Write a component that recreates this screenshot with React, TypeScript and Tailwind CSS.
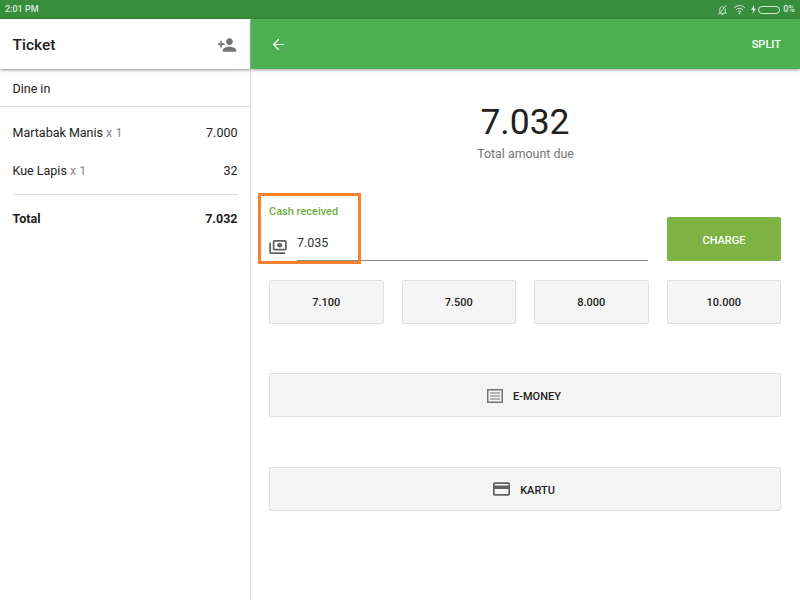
import { ArrowLeft } from 'lucide-react';

const quickAmounts = ['7.100', '7.500', '8.000', '10.000'];

function StatusBar() {
  return (
    <div className="h-[19px] bg-[#388e3c] flex items-center justify-between pl-[5px] pr-[5px] text-white/80 text-[9px] font-medium">
      <span>2:01 PM</span>
      <div className="flex items-center">
        <svg viewBox="0 0 24 24" className="w-[11px] h-[12px]" fill="none" stroke="currentColor" strokeWidth="2">
          <path d="M6 17v-6a6 6 0 0 1 9-5.200M18 9v8l2 2H5M10 22h4M3 22 20 2" />
        </svg>
        <svg viewBox="0 0 24 24" className="w-[13px] h-[13px] ml-[5px]" fill="none" stroke="currentColor" strokeWidth="1.8">
          <path d="M2 9c6-5.500 14-5.500 20 0M5.500 12.500c4-3.500 9-3.500 13 0M9 16c2-1.500 4-1.500 6 0" />
          <circle cx="12" cy="19" r="1" fill="currentColor" />
        </svg>
        <svg viewBox="0 0 5 9" className="w-[5px] h-[9px] ml-[5px] mr-[2px]" fill="currentColor">
          <path d="M3 0 0 5h2L1.500 9 5 3.500H3z" />
        </svg>
        <div className="w-[22px] h-[8px] border border-white/80 rounded-[4px]" />
        <span className="ml-[3px]">0%</span>
      </div>
    </div>
  );
}

function TicketPanel() {
  return (
    <div className="w-[251px] shrink-0 border-r border-[#e0e0e0] bg-white flex flex-col text-[#212121] text-[12.500px]">
      <div className="h-[50px] flex items-center justify-between pl-[12.500px] pr-[13px] shadow-[0_1px_3px_rgba(0,0,0,0.45)] relative">
        <span className="text-[15.500px] font-medium pt-[4px]">Ticket</span>
        <svg viewBox="0 0 24 24" className="w-[20px] h-[20px] mt-[1px] text-[#757575]" fill="currentColor">
          <path d="M15 12c2.210 0 4-1.790 4-4s-1.790-4-4-4-4 1.790-4 4 1.790 4 4 4zm-9-2V7H4v3H1v2h3v3h2v-3h3v-2H6zm9 4c-2.670 0-8 1.340-8 4v2h16v-2c0-2.660-5.330-4-8-4z" />
        </svg>
      </div>
      <div className="h-[38px] flex items-center pl-[12.500px] pt-[3px] border-b border-[#e0e0e0]">Dine in</div>
      <div className="pl-[12.500px] pr-[12.500px] pt-[7px]">
        <div className="h-[38px] flex items-center justify-between">
          <span>Martabak Manis <span className="text-[#8a8a8a]">x 1</span></span>
          <span>7.000</span>
        </div>
        <div className="h-[37px] flex items-center justify-between pt-[2px]">
          <span>Kue Lapis <span className="text-[#8a8a8a]">x 1</span></span>
          <span>32</span>
        </div>
        <div className="mt-[5px] border-t border-[#e0e0e0] h-[48px] pt-[2px] flex items-center justify-between font-bold">
          <span>Total</span>
          <span>7.032</span>
        </div>
      </div>
    </div>
  );
}

function QuickButton({ label }: { label: string }) {
  return (
    <button className="flex-1 h-[44px] pt-[2px] bg-[#f5f5f5] border border-[#e0e0e0] rounded-[2px] text-[11px] font-medium text-[#212121]">
      {label}
    </button>
  );
}

function PaymentPanel() {
  return (
    <div className="flex-1 bg-white flex flex-col">
      <div className="h-[50px] bg-[#4caf50] flex items-center justify-between pl-[19px] pr-[19px] text-white shadow-[0_1px_3px_rgba(0,0,0,0.4)] relative">
        <ArrowLeft className="w-[17px] h-[17px]" strokeWidth={1.7} />
        <span className="text-[11px] font-medium pt-[2px]">SPLIT</span>
      </div>
      <div className="flex flex-col items-center pt-[30px]">
        <div className="text-[35.500px] leading-[46px] text-[#212121] mr-[1px]">7.032</div>
        <div className="text-[12.400px] leading-[16px] mt-[1px] text-[#757575]">Total amount due</div>
      </div>
      <div className="pl-[18px] pr-[19px] pt-[42px] flex flex-col">
        <div className="flex items-start gap-[19px] relative">
          <div className="flex-1">
            <div className="text-[11px] leading-[14px] pt-[1px] h-[14px] text-[#6aaf3d] font-medium">Cash received</div>
            <div className="flex items-end mt-[15px]">
              <svg viewBox="2 4 20 16" className="w-[18px] h-[14px] text-[#616161] mb-[7px] shrink-0" fill="currentColor">
                <path d="M4 7H2v11c0 1.100.9 2 2 2h16v-2H4V7zm16-3H8c-1.100 0-2 .9-2 2v8c0 1.100.9 2 2 2h12c1.100 0 2-.9 2-2V6c0-1.100-.9-2-2-2zm0 10H8V6h12v8zm-6-1.500c1.660 0 3-1.120 3-2.500s-1.340-2.500-3-2.500-3 1.120-3 2.500 1.340 2.500 3 2.500z" />
              </svg>
              <div className="flex-1 ml-[10px] h-[28px] pt-[1px] border-b border-[#8a8a8a] text-[12.500px] leading-[18px] text-[#333333]">7.035</div>
            </div>
          </div>
          <button className="w-[114px] h-[44px] pt-[4px] mt-[13px] bg-[#7cb342] rounded-[2px] text-white text-[11px] font-medium">CHARGE</button>
          <div className="absolute left-[-11px] top-[-11px] w-[103px] h-[71px] border-[3px] border-[#f58233]" />
        </div>
        <div className="flex gap-[18px] mt-[19px]">
          {quickAmounts.map((a) => (
            <QuickButton key={a} label={a} />
          ))}
        </div>
        <button className="mt-[49px] h-[44px] bg-[#f5f5f5] border border-[#e0e0e0] rounded-[2px] flex items-center justify-center gap-[10px] pr-[2px] text-[11px] font-medium text-[#212121]">
          <svg viewBox="0 0 16 14" className="w-[16px] h-[14px] mt-[1px] text-[#757575]" fill="none" stroke="currentColor">
            <path d="M.75.75h14.500v12.500H.75z" strokeWidth="1.500" />
            <path d="M3 4h10M3 7h10M3 10h10" strokeWidth="1" />
          </svg>
          <span className="pt-[5px]">E-MONEY</span>
        </button>
        <button className="mt-[50px] h-[44px] bg-[#f5f5f5] border border-[#e0e0e0] rounded-[2px] flex items-center justify-center gap-[10px] pr-[2px] text-[11px] font-medium text-[#212121]">
          <svg viewBox="2 4 20 16" className="w-[17px] h-[14px] text-[#616161]" fill="currentColor">
            <path d="M20 4H4c-1.110 0-1.990.89-1.990 2L2 18c0 1.110.89 2 2 2h16c1.110 0 2-.89 2-2V6c0-1.110-.89-2-2-2zm0 14H4v-6h16v6zm0-10H4V6h16v2z" />
          </svg>
          <span className="pt-[5px]">KARTU</span>
        </button>
      </div>
    </div>
  );
}

export default function App() {
  return (
    <div className="w-[800px] h-[600px] flex flex-col overflow-hidden bg-white font-['Roboto',sans-serif]">
      <StatusBar />
      <div className="flex-1 flex min-h-0">
        <TicketPanel />
        <PaymentPanel />
      </div>
    </div>
  );
}
